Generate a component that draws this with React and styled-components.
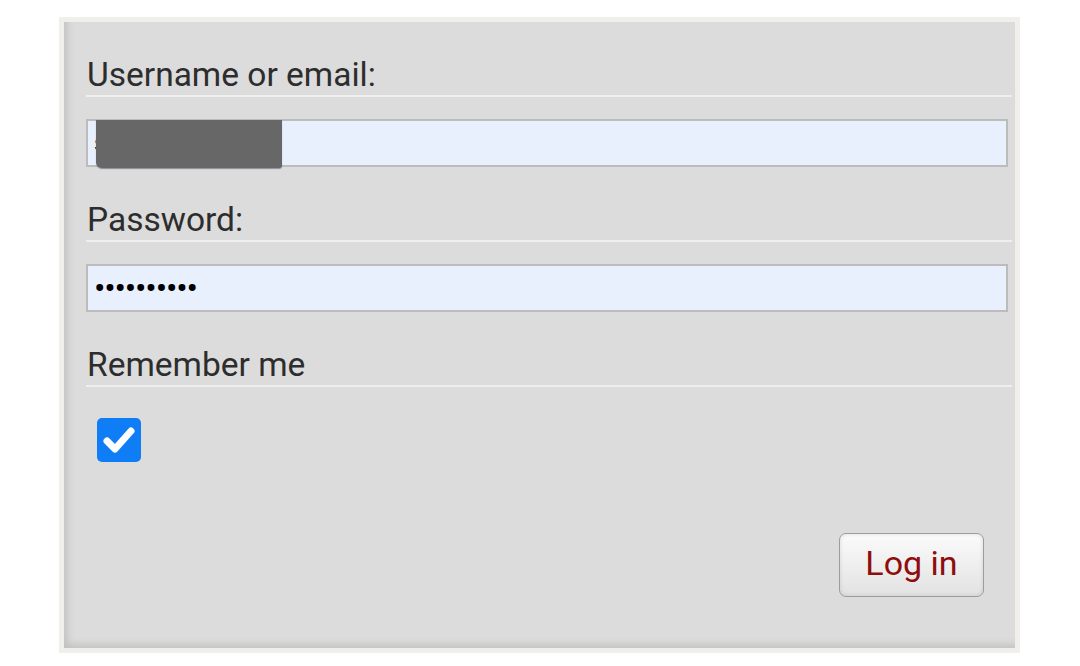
import React from "react";
import styled, { createGlobalStyle } from "styled-components";

const GlobalStyle = createGlobalStyle`
  html, body {
    margin: 0;
    padding: 0;
    background: #ffffff;
    font-family: Roboto, "Noto Sans", sans-serif;
  }
`;

const Page = styled.div`
  padding: 17px 60px 13px 59px;
`;

const Frame = styled.div`
  border: 5px solid #f1efeb;
  background: #dcdcdc;
  box-shadow: inset 7px -7px 9px -4px rgba(0, 0, 0, 0.13);
  padding: 32px 3px 0 22px;
  height: 636px;
  box-sizing: border-box;
  display: flex;
  flex-direction: column;
`;

const Field = styled.div`
  display: flex;
  flex-direction: column;
`;

const Label = styled.label`
  font-size: 33.5px;
  line-height: 41px;
  color: #2d2d2d;
  padding-left: 1px;
  border-bottom: 2px solid #efefef;
`;

const InputWrap = styled.div`
  position: relative;
  margin: 22px 4px 32px 0;
`;

const TextInput = styled.input`
  display: block;
  width: 100%;
  box-sizing: border-box;
  height: 48px;
  border: 2px solid #bcbcbc;
  background: #e8f0fe;
  font-family: Roboto, sans-serif;
  font-size: ${(p) => (p.type === "password" ? "34px" : "24px")};
  letter-spacing: ${(p) => (p.type === "password" ? "-1.2px" : "0")};
  color: #000;
  padding: 0 6px;
  outline: none;
`;

const Redaction = styled.div`
  position: absolute;
  left: 10px;
  top: 1px;
  width: 186px;
  height: 48px;
  background: #676767;
  border-radius: 0 0 3px 6px;
  box-shadow: 0 1px 1px rgba(60, 60, 90, 0.5);
`;

const CheckRow = styled.div`
  margin: 31px 0 0 11px;
`;

const CheckBox = styled.div`
  width: 44px;
  height: 44px;
  border-radius: 5px;
  background: #0f7df5;
  display: flex;
  align-items: center;
  justify-content: center;
`;

const Actions = styled.div`
  display: flex;
  justify-content: flex-end;
  padding-right: 28px;
  margin-top: 71px;
`;

const Button = styled.button`
  width: 145px;
  height: 64px;
  border: 1px solid #9d9d9d;
  border-radius: 7px;
  background: linear-gradient(#fbfbfb, #e2e2e2);
  box-shadow: inset 0 0 4px rgba(0, 0, 0, 0.12);
  color: #8f0d0d;
  font-family: Roboto, sans-serif;
  font-size: 34px;
  padding: 0 0 4px;
`;

export default function App() {
  return (
    <>
      <GlobalStyle />
      <Page>
        <Frame>
          <Field>
            <Label>Username or email:</Label>
            <InputWrap>
              <TextInput type="text" defaultValue="someone" readOnly />
              <Redaction />
            </InputWrap>
          </Field>
          <Field>
            <Label>Password:</Label>
            <InputWrap>
              <TextInput type="password" defaultValue="abcdefghij" readOnly />
            </InputWrap>
          </Field>
          <Field>
            <Label>Remember me</Label>
            <CheckRow>
              <CheckBox>
                <svg width="36" height="36" viewBox="0 0 36 36">
                  <path
                    d="M6 19 L14 27 L30 9"
                    fill="none"
                    stroke="#fff"
                    strokeWidth="7"
                    strokeLinecap="round"
                    strokeLinejoin="round"
                  />
                </svg>
              </CheckBox>
            </CheckRow>
          </Field>
          <Actions>
            <Button>Log in</Button>
          </Actions>
        </Frame>
      </Page>
    </>
  );
}
